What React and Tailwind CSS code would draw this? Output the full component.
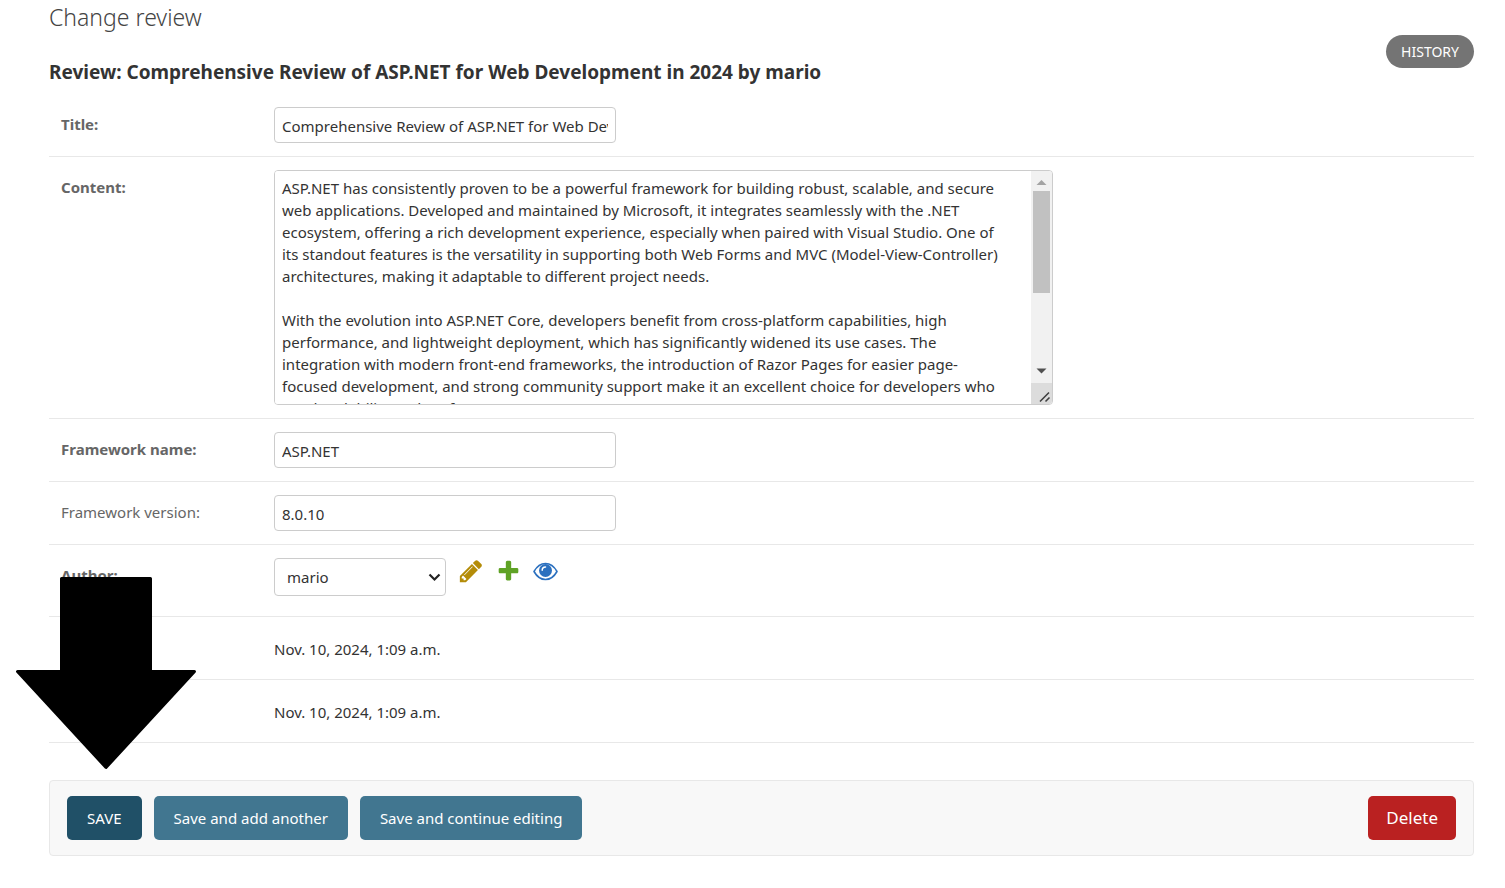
const INPUT =
  "h-9 w-[342px] rounded border border-[#ccc] bg-white px-[7px] pt-0.5 text-[15px] text-[#333] outline-none focus:border-[#999]";

const CONTENT = `ASP.NET has consistently proven to be a powerful framework for building robust, scalable, and secure
web applications. Developed and maintained by Microsoft, it integrates seamlessly with the .NET
ecosystem, offering a rich development experience, especially when paired with Visual Studio. One of
its standout features is the versatility in supporting both Web Forms and MVC (Model-View-Controller)
architectures, making it adaptable to different project needs.

With the evolution into ASP.NET Core, developers benefit from cross-platform capabilities, high
performance, and lightweight deployment, which has significantly widened its use cases. The
integration with modern front-end frameworks, the introduction of Razor Pages for easier page-
focused development, and strong community support make it an excellent choice for developers who
need scalability and performance.`;

function Row({ label, htmlFor, bold, tall, children }) {
  return (
    <div
      className={`flex items-start border-b border-[#e8e8e8] px-3 pt-[13px] ${tall ? "pb-5" : "pb-[13px]"}`}
    >
      <div className="w-[213px] shrink-0 pt-[5px]">
        {label && (
          <label
            htmlFor={htmlFor}
            className={`block text-[15px] leading-6 text-[#666] ${bold ? "font-bold" : ""}`}
          >
            {label}
          </label>
        )}
      </div>
      {children}
    </div>
  );
}

function ContentField() {
  return (
    <div className="flex h-[235px] w-[779px] overflow-hidden rounded border border-[#ccc]">
      <textarea
        id="content"
        defaultValue={CONTENT}
        className="min-w-0 flex-1 resize-none overflow-y-auto whitespace-pre bg-white px-[7px] pt-1.5 text-[15px] leading-[22px] text-[#333] outline-none [scrollbar-width:none]"
      />
      <div className="flex w-[21px] flex-col items-center bg-[#f1f1f1]">
        <svg className="h-5 w-[21px] shrink-0" viewBox="0 0 21 20">
          <path d="M5.5 14 10.5 9l5 5z" fill="#a3a3a3" />
        </svg>
        <div className="h-[102px] w-[17px] shrink-0 bg-[#c1c1c1]" />
        <div className="flex-1" />
        <svg className="h-[21px] w-[21px] shrink-0" viewBox="0 0 21 21">
          <path d="M5.5 6.500h10l-5 5z" fill="#505050" />
        </svg>
        <svg className="h-[21px] w-[21px] shrink-0 bg-[#dcdcdc]" viewBox="0 0 21 21">
          <path d="M9 18.500 18 9.500M14.500 18.500l4-4" stroke="#404040" strokeWidth="1.6" fill="none" />
        </svg>
      </div>
    </div>
  );
}

function PencilIcon() {
  return (
    <svg width="26" height="26" viewBox="0 0 1792 1792" fill="#b48c08">
      <path d="M491 1536l91-91-235-235-91 91v107h128v128h107zm523-928q0-22-22-22-10 0-17 7l-542 542q-7 7-7 17 0 22 22 22 10 0 17-7l542-542q7-7 7-17zm-54-192l416 416-832 832h-416v-416zm683 96q0 53-37 90l-166 166-416-416 166-165q36-38 90-38 53 0 91 38l235 234q37 39 37 91z" />
    </svg>
  );
}

function PlusIcon() {
  return (
    <svg width="25" height="25" viewBox="0 0 1792 1792" fill="#5fa225">
      <path d="M1600 736v192q0 40-28 68t-68 28h-416v416q0 40-28 68t-68 28h-192q-40 0-68-28t-28-68v-416h-416q-40 0-68-28t-28-68v-192q0-40 28-68t68-28h416v-416q0-40 28-68t68-28h192q40 0 68 28t28 68v416h416q40 0 68 28t28 68z" />
    </svg>
  );
}

function EyeIcon() {
  return (
    <svg width="25" height="25" viewBox="0 0 25 25">
      <path d="M1 12.500Q5.500 4.500 12.500 4.500T24 12.500Q19.500 20.500 12.500 20.500T1 12.500z" fill="none" stroke="#2b70bf" strokeWidth="1.600" strokeLinejoin="round" />
      <circle cx="12.500" cy="11.500" r="6.500" fill="#2b70bf" />
      <path d="M9.200 11.200a3.300 3.300 0 0 1 3.300-3.300" fill="none" stroke="#fff" strokeWidth="1.500" strokeLinecap="round" />
    </svg>
  );
}

export default function App() {
  return (
    <main className="relative min-h-screen bg-white pr-[31px] pb-8 pl-[49px] font-['Noto_Sans',sans-serif] text-[15px] text-[#333]">
      <header className="flex items-start justify-between">
        <div>
          <h1 className="pt-px text-[23px] leading-8 font-light text-[#444]">Change review</h1>
          <h2 className="pt-[25px] pb-2 text-[19px] leading-7 font-bold">
            Review: Comprehensive Review of ASP.NET for Web Development in 2024 by mario
          </h2>
        </div>
        <a
          href="#history"
          className="mt-[35px] rounded-full bg-[#747474] px-[15px] text-sm leading-[33px] text-white"
        >
          HISTORY
        </a>
      </header>

      <form>
        <Row label="Title:" htmlFor="title" bold>
          <input id="title" className={INPUT} defaultValue="Comprehensive Review of ASP.NET for Web Development in 2024" />
        </Row>
        <Row label="Content:" htmlFor="content" bold>
          <ContentField />
        </Row>
        <Row label="Framework name:" htmlFor="framework-name" bold>
          <input id="framework-name" className={INPUT} defaultValue="ASP.NET" />
        </Row>
        <Row label="Framework version:" htmlFor="framework-version">
          <input id="framework-version" className={INPUT} defaultValue="8.0.10" />
        </Row>
        <Row label="Author:" htmlFor="author" bold tall>
          <div className="grid w-[172px] items-center">
            <select
              id="author"
              className="col-start-1 row-start-1 h-[38px] appearance-none rounded border border-[#ccc] bg-white px-3 text-[15px] text-[#333] outline-none"
            >
              <option>mario</option>
            </select>
            <svg className="pointer-events-none col-start-1 row-start-1 mr-[5px] justify-self-end" width="13" height="9" viewBox="0 0 13 9" fill="none">
              <path d="M1.500 1.500l5 5 5-5" stroke="#222" strokeWidth="2.200" />
            </svg>
          </div>
          <div className="flex items-center gap-3 pl-3">
            <button type="button" aria-label="Change selected author"><PencilIcon /></button>
            <button type="button" aria-label="Add another author"><PlusIcon /></button>
            <button type="button" aria-label="View selected author"><EyeIcon /></button>
          </div>
        </Row>
        <Row>
          <p className="pt-[7px] pb-[5px] leading-6">Nov. 10, 2024, 1:09 a.m.</p>
        </Row>
        <Row>
          <p className="pt-[7px] pb-[5px] leading-6">Nov. 10, 2024, 1:09 a.m.</p>
        </Row>

        <div className="mt-[37px] flex items-center gap-3 rounded border border-[#e8e8e8] bg-[#f8f8f8] px-[17px] py-[15px]">
          <button type="submit" className="h-11 rounded-[5px] bg-[#205067] px-5 text-[15px] text-white">SAVE</button>
          <button type="submit" className="h-11 rounded-[5px] bg-[#417690] px-5 text-[15px] text-white">Save and add another</button>
          <button type="submit" className="h-11 rounded-[5px] bg-[#417690] px-5 text-[15px] text-white">Save and continue editing</button>
          <a href="#delete" className="ml-auto rounded-[5px] bg-[#ba2121] px-[18px] text-[17px] leading-[44px] text-white">Delete</a>
        </div>
      </form>

      <svg className="pointer-events-none absolute top-[576px] left-[15px]" width="182" height="194" viewBox="0 0 182 194">
        <path d="M46.500 2.500H135.500V95.500H179.500L91 191.500 2.500 95.500H46.500z" stroke="#000" strokeWidth="3" strokeLinejoin="round" />
      </svg>
    </main>
  );
}
